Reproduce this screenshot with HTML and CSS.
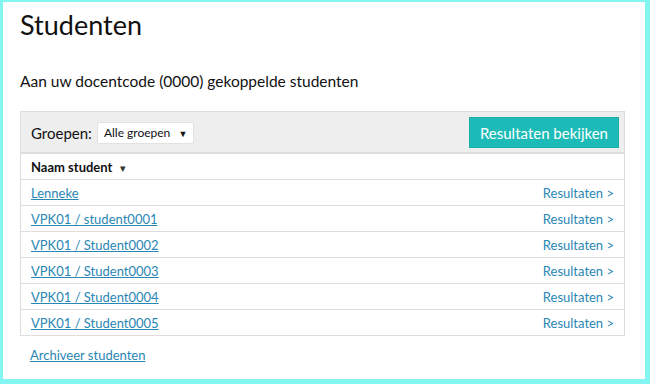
FILE: index.html
```html
<!DOCTYPE html>
<html lang="nl">
<head>
<meta charset="UTF-8">
<meta name="viewport" content="width=device-width, initial-scale=1.0">
<title>Studenten</title>
<link rel="stylesheet" href="styles.css">
</head>
<body>
<div class="frame">
  <h1>Studenten</h1>
  <p class="intro">Aan uw docentcode (0000) gekoppelde studenten</p>

  <div class="student-table">
    <div class="toolbar">
      <label class="group-label">Groepen:
        <span class="select">Alle groepen <span class="caret">&#9660;</span></span>
      </label>
      <button class="results-btn">Resultaten bekijken</button>
    </div>
    <div class="row head-row">
      <span class="col-name">Naam student <span class="sort">&#9662;</span></span>
    </div>
    <div class="row"><a href="#">Lenneke</a><a class="res-link" href="#">Resultaten &gt;</a></div>
    <div class="row"><a href="#">VPK01 / student0001</a><a class="res-link" href="#">Resultaten &gt;</a></div>
    <div class="row"><a href="#">VPK01 / Student0002</a><a class="res-link" href="#">Resultaten &gt;</a></div>
    <div class="row"><a href="#">VPK01 / Student0003</a><a class="res-link" href="#">Resultaten &gt;</a></div>
    <div class="row"><a href="#">VPK01 / Student0004</a><a class="res-link" href="#">Resultaten &gt;</a></div>
    <div class="row"><a href="#">VPK01 / Student0005</a><a class="res-link" href="#">Resultaten &gt;</a></div>
  </div>

  <a class="archive-link" href="#">Archiveer studenten</a>
</div>
</body>
</html>
```

FILE: styles.css
```css
html, body {
  margin: 0;
  padding: 0;
  background-color: #fff;
}

body {
  font-family: Lato, "Open Sans", sans-serif;
  color: #111;
}

.frame {
  box-sizing: border-box;
  width: 650px;
  height: 384px;
  border-style: solid;
  border-color: #84f6f2;
  border-width: 2px 5px 5px 3px;
  padding: 8px 20px 0 17px;
}

h1 {
  margin: 0;
  font-size: 27px;
  font-weight: normal;
  line-height: 30px;
}

.intro {
  margin: 31px 0 0;
  font-size: 15.5px;
  line-height: 20px;
}

.student-table {
  margin-top: 20px;
  border: 1px solid #ddd;
  width: 603px;
}

.toolbar {
  display: flex;
  align-items: center;
  justify-content: space-between;
  background-color: #eee;
  padding: 5px 5px 4px 10px;
  border-bottom: 2px solid #ddd;
}

.group-label {
  font-size: 15px;
  display: flex;
  align-items: center;
  gap: 5px;
}

.select {
  background-color: #fff;
  border: 1px solid #e2e2e2;
  border-radius: 2px;
  font-size: 12px;
  padding: 2px 6px;
  line-height: 15px;
}

.caret {
  font-size: 9px;
  margin-left: 5px;
}

.results-btn {
  background-color: #1dbbb7;
  color: #fff;
  border: 1px solid #19aea9;
  font-family: inherit;
  font-size: 15px;
  padding: 0 10px;
  height: 31px;
}

.row {
  display: flex;
  justify-content: space-between;
  align-items: center;
  height: 25px;
  padding: 0 10px;
  border-top: 1px solid #ddd;
  font-size: 13px;
}

.head-row {
  border-top: none;
  font-weight: bold;
}

.sort {
  font-weight: normal;
  font-size: 11px;
  margin-left: 4px;
  color: #333;
}

.row a {
  color: #2a86b3;
}

.row a.res-link {
  text-decoration: none;
}

.archive-link {
  display: inline-block;
  margin: 11px 0 0 10px;
  font-size: 13px;
  color: #2a86b3;
}
```
